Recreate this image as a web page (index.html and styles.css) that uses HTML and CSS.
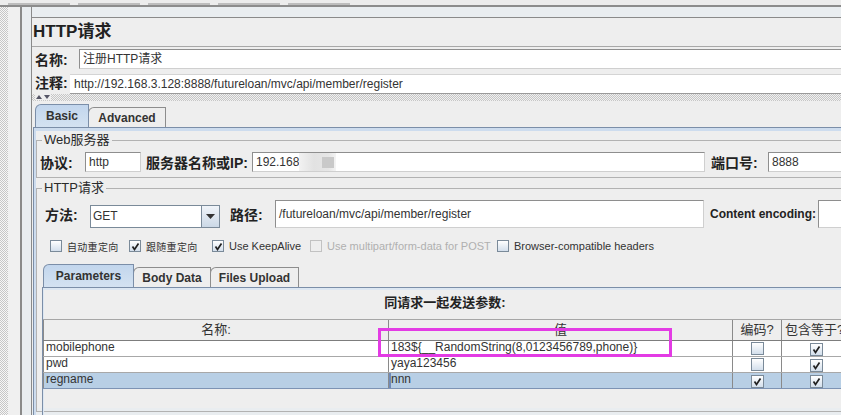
FILE: index.html
```html
<!DOCTYPE html>
<html lang="zh-CN">
<head>
  <meta charset="UTF-8">
  <meta name="viewport" content="width=device-width, initial-scale=1.0">
  <title>HTTP请求</title>
  <link rel="stylesheet" href="styles.css">
</head>
<body>
  <div class="toolbar">
    <span class="tool"></span><span class="tool"></span><span class="tool"></span><span class="tool"></span><span class="tool"></span>
  </div>
  <div class="workspace">
    <div class="tree-edge">
      <div class="stipple"></div>
      <div class="gap"></div>
      <div class="rule"></div>
      <div class="pad"></div>
    </div>
    <div class="editor">
      <div class="sampler">
        <div class="title">HTTP请求</div>
        <div class="name-row">
          <span class="lbl name-lbl">名称:</span>
          <div class="field name-field">注册HTTP请求</div>
        </div>
        <div class="note-row">
          <span class="lbl note-lbl">注释:</span>
          <div class="note-field">http://192.168.3.128:8888/futureloan/mvc/api/member/register</div>
        </div>
        <div class="splitter">
          <svg width="16" height="6" viewBox="0 0 16 6"><path d="M1 5 L4 1 L7 5 Z" fill="#556"/><path d="M9 1 L15 1 L12 5 Z" fill="#556"/></svg>
        </div>
        <div class="tab-strip">
          <div class="tab selected w-basic">Basic</div>
          <div class="tab w-adv">Advanced</div>
        </div>
        <div class="tab-panel">
          <fieldset class="group web">
            <legend>Web服务器</legend>
            <div class="row">
              <span class="lbl w-proto">协议:</span>
              <div class="field proto-field">http</div>
              <span class="lbl w-host">服务器名称或IP:</span>
              <div class="field host-field">192.168<span class="blur"><span class="blur-dark"></span></span></div>
              <span class="lbl w-port">端口号:</span>
              <div class="field port-field">8888</div>
            </div>
          </fieldset>
          <fieldset class="group http">
            <legend>HTTP请求</legend>
            <div class="row method-row">
              <span class="lbl w-method">方法:</span>
              <div class="combo">
                <span class="combo-value">GET</span>
                <span class="combo-btn"><svg width="9" height="5" viewBox="0 0 9 5"><path d="M0 0 L9 0 L4.5 5 Z" fill="#333"/></svg></span>
              </div>
              <span class="lbl w-path">路径:</span>
              <div class="field path-field">/futureloan/mvc/api/member/register</div>
              <span class="lbl w-enc">Content encoding:</span>
              <div class="field enc-field"></div>
            </div>
            <div class="row check-row">
              <span class="check w-c1"><span class="box"></span><span class="cjk">自动重定向</span></span>
              <span class="check w-c2"><span class="box"><svg width="9" height="9" viewBox="0 0 9 9"><path d="M1.5 4.5 L3.5 7.5 L7.5 1.5" fill="none" stroke="#222" stroke-width="1.7"/></svg></span><span class="cjk">跟随重定向</span></span>
              <span class="check w-c3"><span class="box"><svg width="9" height="9" viewBox="0 0 9 9"><path d="M1.5 4.5 L3.5 7.5 L7.5 1.5" fill="none" stroke="#222" stroke-width="1.7"/></svg></span>Use KeepAlive</span>
              <span class="check disabled w-c4"><span class="box"></span>Use multipart/form-data for POST</span>
              <span class="check"><span class="box"></span>Browser-compatible headers</span>
            </div>
            <div class="tab-strip param-tabs">
              <div class="tab selected w-params">Parameters</div>
              <div class="tab w-body">Body Data</div>
              <div class="tab w-files">Files Upload</div>
            </div>
            <div class="param-panel">
              <div class="caption">同请求一起发送参数:</div>
              <table class="params">
                <colgroup><col class="c-name"><col class="c-value"><col class="c-enc"><col class="c-eq"></colgroup>
                <tr>
                  <th>名称:</th><th>值</th><th>编码?</th><th class="eq-head">包含等于?</th>
                </tr>
                <tr>
                  <td>mobilephone</td><td>183${__RandomString(8,0123456789,phone)}</td>
                  <td class="mid"><span class="box"></span></td>
                  <td class="mid"><span class="box"><svg width="9" height="9" viewBox="0 0 9 9"><path d="M1.5 4.5 L3.5 7.5 L7.5 1.5" fill="none" stroke="#222" stroke-width="1.7"/></svg></span></td>
                </tr>
                <tr>
                  <td>pwd</td><td>yaya123456</td>
                  <td class="mid"><span class="box"></span></td>
                  <td class="mid"><span class="box"><svg width="9" height="9" viewBox="0 0 9 9"><path d="M1.5 4.5 L3.5 7.5 L7.5 1.5" fill="none" stroke="#222" stroke-width="1.7"/></svg></span></td>
                </tr>
                <tr class="selected">
                  <td>regname</td><td class="focus">nnn</td>
                  <td class="mid"><span class="box"><svg width="9" height="9" viewBox="0 0 9 9"><path d="M1.5 4.5 L3.5 7.5 L7.5 1.5" fill="none" stroke="#222" stroke-width="1.7"/></svg></span></td>
                  <td class="mid"><span class="box"><svg width="9" height="9" viewBox="0 0 9 9"><path d="M1.5 4.5 L3.5 7.5 L7.5 1.5" fill="none" stroke="#222" stroke-width="1.7"/></svg></span></td>
                </tr>
              </table>
            </div>
          </fieldset>
        </div>
      </div>
    </div>
  </div>
  <div class="highlight"></div>
</body>
</html>
```

FILE: styles.css
```css
body {
  margin: 0;
  width: 841px;
  height: 415px;
  overflow: hidden;
  position: relative;
  background-color: #eeeeee;
  font-family: "Liberation Sans", "Noto Sans CJK SC", sans-serif;
  font-size: 12px;
  color: #333;
}
.toolbar {
  height: 5px;
  background-color: #ececec;
  border-bottom: 2px solid #8c8c8c;
  display: flex;
}
.toolbar .tool {
  width: 62px;
  margin-left: 8px;
  border-bottom: 2px solid #bdbdbd;
  box-sizing: border-box;
}
.workspace {
  display: flex;
  height: 408px;
}
.tree-edge {
  display: flex;
  flex-shrink: 0;
  width: 31px;
}
.stipple {
  width: 8px;
  background: repeating-conic-gradient(#c6c6c6 0 25%, #f6f6f6 0 50%) 0 0 / 2px 2px;
}
.gap {
  width: 12px;
  background-color: #f0f0f0;
}
.rule {
  width: 2px;
  background-color: #8a8a8a;
}
.pad {
  width: 9px;
  background-color: #e9edf0;
}
.editor {
  width: 900px;
  flex-shrink: 0;
  border-left: 1px solid #8a8a8a;
  background-color: #e9edf0;
  padding-top: 10px;
}
.sampler {
  border-top: 1px solid #8a8a8a;
  background-color: #eeeeee;
  height: 390px;
}
.title {
  height: 28px;
  line-height: 28px;
  padding-left: 1px;
  font-size: 17px;
  font-weight: bold;
  color: #222;
}
.lbl {
  flex-shrink: 0;
  font-weight: bold;
  font-size: 14px;
  color: #222;
  white-space: nowrap;
}
.name-row {
  display: flex;
  align-items: center;
  height: 24px;
  border-top: 1px solid #a8a8a8;
  box-sizing: border-box;
  padding-left: 3px;
}
.name-lbl, .note-lbl {
  width: 44px;
}
.field {
  box-sizing: border-box;
  height: 20px;
  line-height: 18px;
  padding-left: 3px;
  background-color: #fff;
  border: 1px solid #8e8e8e;
  border-right-color: #cfcfcf;
  border-bottom-color: #cfcfcf;
  white-space: nowrap;
  overflow: hidden;
  flex-shrink: 0;
}
.name-field {
  width: 820px;
  margin-top: 1px;
}
.note-row {
  display: flex;
  align-items: center;
  height: 24px;
  padding-left: 3px;
}
.note-lbl {
  width: 35px;
}
.note-field {
  flex: 1;
  height: 20px;
  line-height: 19px;
  margin-top: 3px;
  padding-left: 4px;
  background-color: #fff;
  border-top: 1px solid #d4d4d4;
  border-bottom: 1px solid #9a9a9a;
  box-sizing: border-box;
  white-space: nowrap;
}
.splitter {
  height: 7px;
  padding-left: 3px;
  background: repeating-conic-gradient(#c6c6c6 0 25%, #f0f0f0 0 50%) 0 0 / 2px 2px;
}
.splitter svg {
  display: block;
  background-color: #eeeeee;
}
.tab-strip {
  display: flex;
  align-items: flex-end;
  height: 26px;
  padding-left: 3px;
}
.tab {
  box-sizing: border-box;
  height: 20px;
  display: flex;
  align-items: center;
  justify-content: center;
  border: 1px solid #8d8d8d;
  border-bottom: none;
  border-top-left-radius: 6px;
  margin-right: -1px;
  background-color: #eeeeee;
  font-weight: bold;
  color: #333;
}
.tab.selected {
  height: 23px;
  border-color: #7b8ea8;
  background: linear-gradient(#c2d6ed, #d4e2f1);
  position: relative;
  z-index: 1;
}
.w-basic { width: 54px; }
.w-adv { width: 78px; }
.w-params { width: 91px; }
.w-body { width: 78px; }
.w-files { width: 89px; }
.tab-panel {
  margin-left: 1px;
  padding-left: 2px;
  border-top: 1px solid #7b8ea8;
  border-left: 1px solid #7b8ea8;
  box-shadow: inset 2px 3px 0 #cddcee;
  height: 300px;
}
.group {
  margin: 4px 0 0;
  padding: 4px 0 5px 3px;
  border: 1px solid #b2b2b2;
  border-right: none;
  min-width: 0;
}
.group legend {
  margin-left: 2px;
  padding: 0 2px;
  font-size: 13px;
  line-height: 16px;
  color: #2a2a2a;
}
.group.http {
  margin-top: 2px;
  padding-top: 0;
  padding-bottom: 0;
  height: 230px;
}
.row {
  display: flex;
  align-items: center;
  height: 20px;
}
.w-proto { width: 45px; }
.proto-field { width: 56px; }
.w-host { width: 106px; margin-left: 5px; }
.host-field { width: 453px; }
.w-port { width: 57px; margin-left: 6px; }
.port-field { width: 110px; }
.blur {
  display: inline-block;
  vertical-align: top;
  width: 37px;
  height: 19px;
  background: linear-gradient(90deg, #f2f2f2, #e2e2e2 40%, #e6e6e6 80%, #f4f4f4);
  position: relative;
}
.blur-dark {
  position: absolute;
  left: 23px;
  top: 4px;
  width: 12px;
  height: 11px;
  background-color: #c9c9c9;
}
.method-row {
  height: 28px;
  margin-top: 4px;
}
.w-method { width: 45px; margin-left: 5px; }
.combo {
  display: flex;
  align-self: flex-end;
  box-sizing: border-box;
  width: 130px;
  height: 23px;
  border: 1px solid #7a8a99;
  background-color: #fff;
  flex-shrink: 0;
}
.combo-value {
  flex: 1;
  line-height: 21px;
  padding-left: 2px;
}
.combo-btn {
  width: 17px;
  display: flex;
  align-items: center;
  justify-content: center;
  border-left: 1px solid #7a8a99;
  background: linear-gradient(#f0f4f9, #cbd8e6);
}
.w-path { width: 45px; margin-left: 10px; }
.path-field {
  width: 429px;
  height: 28px;
  line-height: 26px;
}
.w-enc { width: 108px; margin-left: 6px; font-size: 12px; }
.enc-field {
  width: 80px;
  height: 28px;
}
.check-row {
  height: 16px;
  margin-top: 10px;
  padding-left: 10px;
}
.check {
  display: flex;
  align-items: center;
  flex-shrink: 0;
  font-size: 11px;
  color: #333;
  white-space: nowrap;
}
.check .box {
  margin-right: 5px;
}
.check .cjk {
  font-size: 10px;
  letter-spacing: 0.3px;
}
.check.disabled {
  color: #b0b0b0;
}
.check.disabled .box {
  border-color: #c2c2c2;
  background: #eeeeee;
}
.w-c1 { width: 79px; }
.w-c2 { width: 83px; }
.w-c3 { width: 98px; }
.w-c4 { width: 187px; }
.box {
  box-sizing: border-box;
  width: 12px;
  height: 12px;
  display: inline-flex;
  align-items: center;
  justify-content: center;
  border: 1px solid #7a8a99;
  background: linear-gradient(#ffffff, #d3dfec);
  vertical-align: middle;
}
.param-tabs {
  height: 25px;
  margin-top: 8px;
  padding-left: 3px;
}
.param-panel {
  width: 804px;
  margin-left: 2px;
  height: 140px;
  border-top: 1px solid #7b8ea8;
  border-left: 1px solid #7b8ea8;
  box-shadow: inset 1px 2px 0 #dde7f2;
}
.caption {
  padding-top: 7px;
  line-height: 16px;
  text-align: center;
  font-weight: bold;
  font-size: 13px;
  color: #222;
}
.params {
  margin-top: 8px;
  border-collapse: collapse;
  table-layout: fixed;
  width: 808px;
}
.c-name { width: 345px; }
.c-value { width: 344px; }
.c-enc { width: 49px; }
.c-eq { width: 70px; }
.params th {
  height: 20px;
  padding: 0;
  font-weight: normal;
  font-size: 13px;
  color: #333;
  background-color: #eeeeee;
  border-top: 1px solid #a6a6a6;
  border-left: 1px solid #8a8a8a;
  border-bottom: 1px solid #7d7d7d;
  line-height: 14px;
  white-space: nowrap;
}
.params th.eq-head {
  text-align: left;
  padding-left: 3px;
}
.params td {
  height: 15px;
  padding: 0 2px;
  line-height: 13px;
  vertical-align: top;
  background-color: #fff;
  border-left: 1px solid #8a8a8a;
  border-bottom: 1px solid #a8a8a8;
  white-space: nowrap;
  overflow: hidden;
  font-size: 12px;
}
.params td.mid {
  text-align: center;
  vertical-align: middle;
  padding: 0;
}
.params td .box {
  width: 13px;
  height: 13px;
  vertical-align: -2px;
}
.params tr.selected td {
  background-color: #b8cfe5;
  border-top: 1px solid #8ea3c0;
  border-bottom: 1px solid #7d93b4;
}
.params td.focus {
  box-shadow: inset 2px 0 0 #6f8ab8;
}
.highlight {
  position: absolute;
  left: 378px;
  top: 328px;
  width: 294px;
  height: 29px;
  box-sizing: border-box;
  border: 3px solid #e33be4;
}
```
